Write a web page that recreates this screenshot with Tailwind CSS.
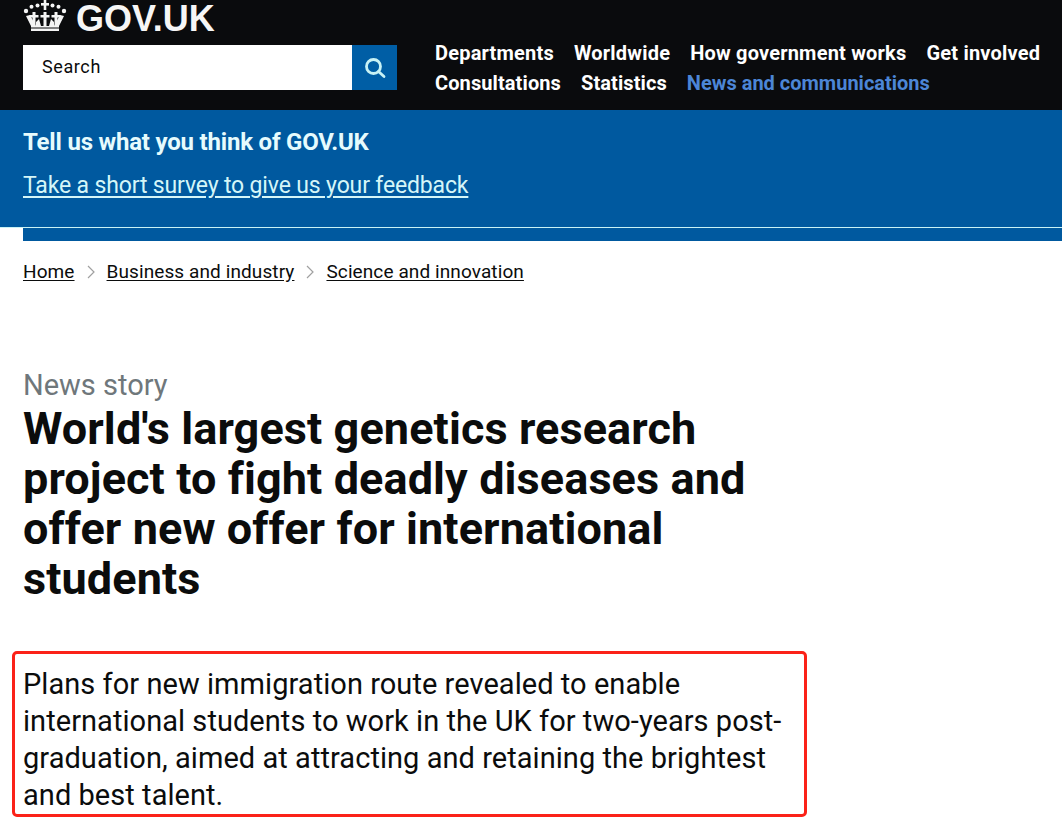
<!DOCTYPE html>
<html lang="en">
<head>
    <meta charset="UTF-8">
    <title>GOV.UK News story</title>
    <script src="https://cdn.jsdelivr.net/npm/@tailwindcss/browser@4"></script>
</head>
<body class="bg-white text-[#0b0c0c] font-['Roboto',sans-serif] h-[817px] overflow-hidden">

    <!-- Black header -->
    <header class="bg-[#0a0b0d] h-[110px] pl-[23px] flex">
        <div class="w-[374px] shrink-0">
            <div class="h-[45px] flex items-start gap-[9px]">
                <svg class="w-[44px] h-[32px] shrink-0" viewBox="0 0 44 32" fill="#f4f4f4">
                    <!-- crown: centre cross, ring of dots, three small crosses on the band -->
                    <rect x="20.700" y="0" width="2.600" height="10"/>
                    <rect x="18" y="3" width="8" height="2.600"/>
                    <circle cx="3" cy="11" r="2.200"/><circle cx="8.500" cy="6.800" r="2"/><circle cx="14.500" cy="5.500" r="2"/>
                    <circle cx="29.500" cy="5.500" r="2"/><circle cx="35.500" cy="6.800" r="2"/><circle cx="41" cy="11" r="2.200"/>
                    <path d="M3 16 L8 26 H13 L7 15 Z M41 16 L36 26 H31 L37 15 Z"/>
                    <path d="M9.500 12 h3 v3 h3 v2.500 h-3 v8.500 h-3 v-8.500 h-3 v-2.500 h3 Z"/>
                    <path d="M20.500 12 h3 v3 h3 v2.500 h-3 v8.500 h-3 v-8.500 h-3 v-2.500 h3 Z"/>
                    <path d="M31.500 12 h3 v3 h3 v2.500 h-3 v8.500 h-3 v-8.500 h-3 v-2.500 h3 Z"/>
                    <path d="M13 22 L16 19 L18 26 H13 Z M31 22 L28 19 L26 26 H31 Z"/>
                    <rect x="8" y="26" width="28" height="1.500"/>
                    <rect x="8" y="28.500" width="28" height="2.500"/>
                </svg>
                <span class="font-['Liberation_Sans',sans-serif] font-bold text-[36px] leading-[36px] pt-px text-[#f6f6f6]">GOV.UK</span>
            </div>
            <div class="flex h-[45px]">
                <div class="w-[329px] bg-white flex items-center pl-[19px] pb-[2px] text-[18px] tracking-[0.6px]">Search</div>
                <div class="w-[45px] bg-[#005ea5] flex items-center justify-center">
                    <svg class="w-[24px] h-[24px]" viewBox="0 0 24 24" fill="none" stroke="#c8f2f5" stroke-width="2.800" stroke-linecap="round">
                        <circle cx="10.500" cy="10.500" r="7"/>
                        <path d="M15.500 15.500 L21 20.500"/>
                    </svg>
                </div>
            </div>
        </div>
        <nav class="ml-[38px] pt-[38px] font-bold text-[20px] leading-[30px] text-white">
            <div class="flex gap-[20px] tracking-[0.2px] whitespace-nowrap">
                <span>Departments</span><span>Worldwide</span><span>How government works</span><span>Get involved</span>
            </div>
            <div class="flex gap-[20px] tracking-[0.1px] whitespace-nowrap">
                <span>Consultations</span><span>Statistics</span><span class="text-[#4c86d6] tracking-normal">News and communications</span>
            </div>
        </nav>
    </header>

    <!-- Survey banner -->
    <section class="bg-[#00599f] h-[118px] pl-[23px] pt-[17px] border-b border-[#c8f2f5]">
        <p class="font-bold text-[24px] leading-[30px] tracking-[-0.2px] text-[#e6fbfd]">Tell us what you think of GOV.UK</p>
        <a class="block mt-[14px] text-[23px] leading-[30px] tracking-[-0.15px] text-[#d5f6f8] underline underline-offset-[3px]">Take a short survey to give us your feedback</a>
    </section>
    <div class="ml-[23px] h-[13px] bg-[#00599f]"></div>

    <!-- Breadcrumbs -->
    <nav class="pl-[23px] mt-[19px] flex items-center text-[19px] leading-[24px] tracking-[0.1px] whitespace-nowrap">
        <a class="underline underline-offset-2">Home</a>
        <svg class="w-[10px] h-[14px] mx-[11px]" viewBox="0 0 10 14" fill="none" stroke="#a0a0a0" stroke-width="1.200"><path d="M2 1 L8 7 L2 13"/></svg>
        <a class="underline underline-offset-2">Business and industry</a>
        <svg class="w-[10px] h-[14px] mx-[11px]" viewBox="0 0 10 14" fill="none" stroke="#a0a0a0" stroke-width="1.200"><path d="M2 1 L8 7 L2 13"/></svg>
        <a class="underline underline-offset-2">Science and innovation</a>
    </nav>

    <!-- Article heading -->
    <main class="pl-[23px]">
        <p class="mt-[83px] text-[29px] leading-[36px] text-[#6f777b]">News story</p>
        <h1 class="mt-px font-bold text-[45px] leading-[50px] tracking-[0.1px] whitespace-nowrap">World's largest genetics research<br>project to fight deadly diseases and<br>offer new offer for international<br>students</h1>

        <!-- Highlighted summary -->
        <div class="relative mt-[62px] whitespace-nowrap text-[29px] leading-[37px] tracking-[0.05px]">
            <div class="absolute left-[-11px] top-[-15px] w-[795px] h-[166px] border-[3px] border-[#fb2218] rounded-[5px]"></div>
            Plans for new immigration route revealed to enable<br>international students to work in the UK for two-years post-<br>graduation, aimed at attracting and retaining the brightest<br>and best talent.
        </div>
    </main>

</body>
</html>
